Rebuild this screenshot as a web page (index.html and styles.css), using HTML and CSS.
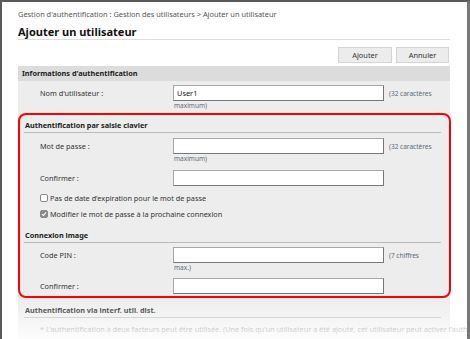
FILE: index.html
```html
<!DOCTYPE html>
<html lang="fr">
<head>
    <meta charset="UTF-8" />
    <title>Ajouter un utilisateur</title>
    <link rel="stylesheet" href="styles.css">
</head>
<body>
    <div class="window">
        <div class="breadcrumb">Gestion d'authentification : Gestion des utilisateurs &gt; Ajouter un utilisateur</div>
        <h1 class="page-title">Ajouter un utilisateur</h1>

        <div class="actions">
            <button class="btn btn-add">Ajouter</button>
            <button class="btn btn-cancel">Annuler</button>
        </div>

        <div class="panel">
            <div class="panel-header">Informations d'authentification</div>

            <div class="field">
                <label class="field-label">Nom d'utilisateur :</label>
                <input class="field-input" type="text" value="User1">
                <span class="field-note">(32 caractères</span>
            </div>
            <div class="field-sub">maximum)</div>

            <div class="highlight">
                <div class="sub-title">Authentification par saisie clavier</div>

                <div class="field field-first">
                    <label class="field-label">Mot de passe :</label>
                    <input class="field-input" type="password">
                    <span class="field-note">(32 caractères</span>
                </div>
                <div class="field-sub">maximum)</div>

                <div class="field field-next">
                    <label class="field-label">Confirmer :</label>
                    <input class="field-input" type="password">
                </div>

                <div class="check check-first">
                    <span class="box"></span>
                    <span>Pas de date d'expiration pour le mot de passe</span>
                </div>
                <div class="check">
                    <span class="box box-on">
                        <svg width="8" height="8" viewBox="0 0 8 8"><path d="M1.3 4.2 L3.2 6 L6.8 1.8" fill="none" stroke="#fff" stroke-width="1.5"/></svg>
                    </span>
                    <span>Modifier le mot de passe à la prochaine connexion</span>
                </div>

                <div class="sub-title sub-title-next">Connexion image</div>

                <div class="field field-pin">
                    <label class="field-label">Code PIN :</label>
                    <input class="field-input" type="password">
                    <span class="field-note">(7 chiffres</span>
                </div>
                <div class="field-sub">max.)</div>

                <div class="field field-last">
                    <label class="field-label">Confirmer :</label>
                    <input class="field-input" type="password">
                </div>
            </div>

            <div class="sub-title sub-title-out">Authentification via interf. util. dist.</div>
            <div class="note">* L'authentification à deux facteurs peut être utilisée. (Une fois qu'un utilisateur a été ajouté, cet utilisateur peut activer l'auth</div>
        </div>

        <div class="fade"></div>
    </div>
</body>
</html>
```

FILE: styles.css
```css
* {
    margin: 0;
    padding: 0;
    box-sizing: border-box;
}

body {
    font-family: 'Noto Sans', 'Open Sans', sans-serif;
    color: #333;
    background: #fff;
}

.window {
    position: relative;
    width: 470px;
    height: 339px;
    overflow: hidden;
    border-top: 2px solid #5a5a5a;
    border-left: 2px solid #5a5a5a;
    border-right: 3px solid #777;
    padding: 0 17px 0 16px;
}

.breadcrumb {
    margin-top: 6px;
    font-size: 7.4px;
    line-height: 12px;
    color: #555;
    white-space: nowrap;
}

.page-title {
    margin-top: 5px;
    font-size: 11px;
    line-height: 14px;
    font-weight: 700;
    color: #111;
    border-bottom: 1px solid #ddd;
}

.actions {
    display: flex;
    justify-content: flex-end;
    gap: 4px;
    margin-top: 7px;
    padding-right: 1px;
}

.btn {
    height: 16px;
    font-family: inherit;
    font-size: 7.4px;
    color: #333;
    background: #ececec;
    border: 1px solid #d4d4d4;
}

.btn-add {
    width: 54px;
}

.btn-cancel {
    width: 53px;
}

.panel {
    margin-top: 3px;
    background: #ededed;
    padding-bottom: 20px;
}

.panel-header {
    background: #dcdcdc;
    padding-left: 4px;
    font-size: 7.3px;
    line-height: 15px;
    font-weight: 700;
    color: #222;
}

.field {
    display: flex;
    align-items: center;
    height: 16px;
    margin-top: 4px;
    padding-left: 22px;
}

.field-label {
    width: 133px;
    font-size: 7.3px;
    color: #333;
}

.field-input {
    width: 211px;
    height: 16px;
    background: #fff;
    border: 1px solid #a8a8a8;
    border-right-color: #777;
    border-bottom-color: #777;
    font-family: inherit;
    font-size: 7.4px;
    padding: 0 3px;
    color: #222;
}

.field-note {
    margin-left: 5px;
    font-size: 6.5px;
    color: #5c6a80;
    white-space: nowrap;
}

.field-sub {
    padding-left: 156px;
    font-size: 6.5px;
    line-height: 9px;
    color: #5c6a80;
}

.highlight {
    margin-top: 3px;
    margin-right: -1px;
    border: 2px solid #f00;
    border-radius: 8px;
    padding-bottom: 2px;
}

.highlight .field {
    padding-left: 20px;
}

.highlight .field-sub {
    padding-left: 154px;
}

.sub-title {
    margin: 4px 8px 0 4px;
    padding-left: 1px;
    font-size: 7.3px;
    line-height: 13px;
    font-weight: 700;
    color: #222;
    border-bottom: 1px solid #bbb;
}

.sub-title-next {
    margin-top: 9px;
}

.sub-title-out {
    margin: 6px 9px 0 6px;
}

.field-first {
    margin-top: 5px;
}

.field-next {
    margin-top: 7px;
}

.field-pin {
    margin-top: 4px;
}

.field-last {
    margin-top: 6px;
}

.check {
    display: flex;
    align-items: center;
    gap: 2px;
    height: 12px;
    margin-top: 4px;
    padding-left: 20px;
    font-size: 7.3px;
    color: #333;
}

.check-first {
    margin-top: 6px;
}

.box {
    display: flex;
    align-items: center;
    justify-content: center;
    width: 8px;
    height: 8px;
    background: #fff;
    border: 1px solid #888;
    border-radius: 2px;
}

.box-on {
    background: #8a8a8a;
    border-color: #8a8a8a;
}

.note {
    margin-top: 5px;
    padding-left: 22px;
    font-size: 7.3px;
    line-height: 12px;
    color: #666;
    white-space: nowrap;
}

.fade {
    position: absolute;
    left: -2px;
    right: -3px;
    bottom: 0;
    height: 40px;
    background: linear-gradient(rgba(255, 255, 255, 0) 0%, rgba(255, 255, 255, 0.3) 35%, rgba(255, 255, 255, 0.88) 100%);
}
```
